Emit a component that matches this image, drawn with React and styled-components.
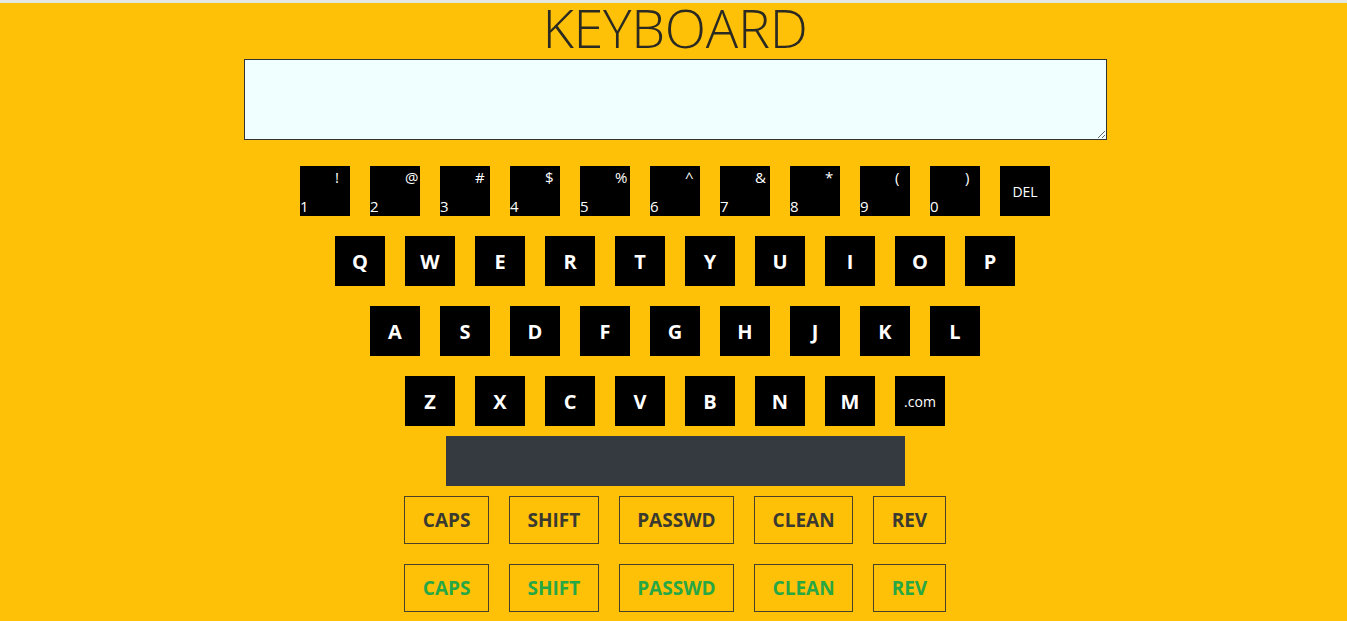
import React from "react";
import styled, { createGlobalStyle } from "styled-components";

const GlobalStyle = createGlobalStyle`
  html, body {
    margin: 0;
    padding: 0;
    background: #e4e8e0;
  }
  body {
    font-family: "Open Sans", "Noto Sans", sans-serif;
  }
`;

const Page = styled.div`
  margin-top: 3px;
  min-height: calc(100vh - 3px);
  background: #ffc107;
  padding-left: 3px;
  display: flex;
  flex-direction: column;
  align-items: center;
`;

const Title = styled.h1`
  margin: 0;
  font-size: 54px;
  line-height: 48px;
  font-weight: 300;
  color: #2b2a22;
  letter-spacing: -0.3px;
`;

const TextBox = styled.textarea`
  display: block;
  box-sizing: border-box;
  width: 863px;
  height: 81px;
  margin: 8px 0 16px;
  background: #f0ffff;
  border: 1px solid #333;
  outline: none;
  font-family: inherit;
  font-size: 16px;
`;

const Row = styled.div`
  display: flex;
  justify-content: center;
`;

const Key = styled.button`
  box-sizing: border-box;
  width: 50px;
  height: 50px;
  margin: 10px;
  padding: 0;
  border: none;
  background: #000;
  color: #fff;
  font-family: inherit;
  font-size: ${(p) => p.$size || 20}px;
  font-weight: ${(p) => (p.$bold ? 700 : 400)};
  display: flex;
  align-items: center;
  justify-content: center;
`;

const NumKey = styled.button`
  box-sizing: border-box;
  width: 50px;
  height: 50px;
  margin: 10px;
  padding: 4px 0 2px;
  border: none;
  background: #000;
  color: #fff;
  font-family: inherit;
  font-size: 15px;
  line-height: 15px;
  display: flex;
  flex-direction: column;
  justify-content: space-between;
  align-items: flex-start;
  text-align: left;
`;

const Sym = styled.span`
  padding-left: 35px;
  white-space: nowrap;
`;

const Digit = styled.span`
  padding-left: 0;
`;

const SpaceBar = styled.button`
  box-sizing: border-box;
  width: 459px;
  height: 50px;
  margin: 0;
  border: none;
  background: #343a40;
`;

const Action = styled.button`
  box-sizing: border-box;
  height: 48px;
  margin: 10px;
  padding: 0 17.5px;
  background: transparent;
  border: 1px solid #4a4228;
  color: ${(p) => (p.$green ? "#28a745" : "#3a3a30")};
  font-family: inherit;
  font-size: 19px;
  font-weight: 700;
`;

const numbers = [
  ["!", "1"],
  ["@", "2"],
  ["#", "3"],
  ["$", "4"],
  ["%", "5"],
  ["^", "6"],
  ["&", "7"],
  ["*", "8"],
  ["(", "9"],
  [")", "0"],
];

const rows = [
  ["Q", "W", "E", "R", "T", "Y", "U", "I", "O", "P"],
  ["A", "S", "D", "F", "G", "H", "J", "K", "L"],
  ["Z", "X", "C", "V", "B", "N", "M"],
];

const actions = ["CAPS", "SHIFT", "PASSWD", "CLEAN", "REV"];

export default function App() {
  return (
    <>
      <GlobalStyle />
      <Page>
        <Title>KEYBOARD</Title>
        <TextBox />
        <Row>
          {numbers.map(([s, d]) => (
            <NumKey key={d}>
              <Sym>{s}</Sym>
              <Digit>{d}</Digit>
            </NumKey>
          ))}
          <Key $size={14}>DEL</Key>
        </Row>
        {rows.map((r, i) => (
          <Row key={i}>
            {r.map((k) => (
              <Key key={k} $bold>
                {k}
              </Key>
            ))}
            {i === 2 && <Key $size={14}>.com</Key>}
          </Row>
        ))}
        <SpaceBar />
        <Row>
          {actions.map((a) => (
            <Action key={a}>{a}</Action>
          ))}
        </Row>
        <Row>
          {actions.map((a) => (
            <Action key={a} $green>
              {a}
            </Action>
          ))}
        </Row>
      </Page>
    </>
  );
}
